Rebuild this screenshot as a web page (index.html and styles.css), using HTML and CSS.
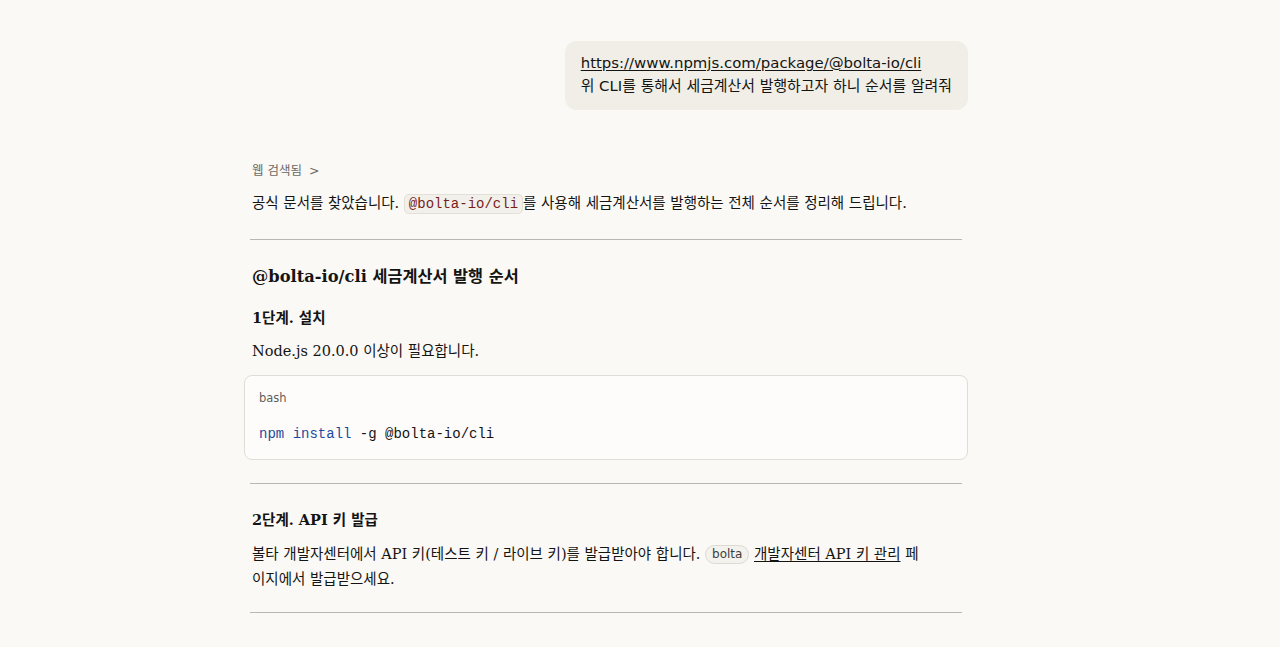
FILE: index.html
```html
<!DOCTYPE html>
<html lang="ko">
<head>
<meta charset="utf-8">
<title>Chat</title>
<link rel="stylesheet" href="styles.css">
</head>
<body>
<main class="thread">
  <div class="user-row">
    <div class="user-bubble">
      <a class="user-link" href="#">https://www.npmjs.com/package/@bolta-io/cli</a>
      <div>위 CLI를 통해서 세금계산서 발행하고자 하니 순서를 알려줘</div>
    </div>
  </div>

  <div class="assistant">
    <div class="search-note">웹 검색됨 <span class="chev">&gt;</span></div>
    <p class="para">공식 문서를 찾았습니다. <code class="inline-code">@bolta-io/cli</code>를 사용해 세금계산서를 발행하는 전체 순서를 정리해 드립니다.</p>
    <hr class="rule">
    <h2 class="h2">@bolta-io/cli 세금계산서 발행 순서</h2>
    <h3 class="h3">1단계. 설치</h3>
    <p class="para">Node.js 20.0.0 이상이 필요합니다.</p>
    <div class="code-block">
      <div class="code-lang">bash</div>
      <pre class="code"><span class="kw">npm</span> <span class="kw">install</span> -g @bolta-io/cli</pre>
    </div>
    <hr class="rule rule-2">
    <h3 class="h3 h3-step2">2단계. API 키 발급</h3>
    <p class="para">볼타 개발자센터에서 API 키(테스트 키 / 라이브 키)를 발급받아야 합니다. <span class="pill">bolta</span> <a class="link" href="#">개발자센터 API 키 관리</a> 페<wbr>이지에서 발급받으세요.</p>
    <hr class="rule rule-3">
  </div>
</main>
</body>
</html>
```
FILE: styles.css
```css
* { box-sizing: border-box; }
html, body { margin: 0; padding: 0; }
body {
  background: #faf9f5;
  color: #141413;
  font-family: "DejaVu Serif", "Noto Sans CJK KR", serif;
  height: 647px;
  overflow: hidden;
}
.thread {
  width: 724px;
  margin: 0 auto;
  padding-top: 41px;
  position: relative;
  left: -34px;
}
.user-row { display: flex; justify-content: flex-end; }
.user-bubble {
  background: #f0eee6;
  border-radius: 12px;
  padding: 11px 16px 12px 16px;
  font-family: "DejaVu Sans", "Noto Sans CJK KR", sans-serif;
  font-size: 14.9px;
  line-height: 23px;
  color: #141413;
}
.user-link { color: #141413; text-decoration: underline; text-underline-offset: 2px; }
.assistant { padding: 0 42px 0 8px; margin-top: 51px; }
.search-note {
  font-family: "DejaVu Sans", "Noto Sans CJK KR", sans-serif;
  font-size: 12.5px;
  color: #6b6a65;
  line-height: 20px;
  margin-bottom: 10px;
}
.chev { margin-left: 3px; }
.para {
  font-size: 14.5px;
  line-height: 25px;
  margin: 0;
}
.inline-code {
  font-family: "Liberation Mono", monospace;
  font-size: 14px;
  color: #7a1e1e;
  background: #f2f0ea;
  border: 1px solid #e3e0d8;
  border-radius: 5px;
  padding: 1px 4px;
}
.rule {
  border: 0;
  border-top: 1px solid #b9b7b0;
  margin: 22px -36px 24px -2px;
}
.h2 {
  font-size: 16.3px;
  font-weight: bold;
  line-height: 26px;
  margin: 0 0 16px 0;
}
.h3 {
  font-size: 14.5px;
  font-weight: bold;
  line-height: 24px;
  margin: 0 0 9px 0;
}
.h3-step2 { margin-bottom: 10px; }
.code-block {
  margin: 11px -42px 0 -8px;
  background: #fdfcfa;
  border: 1px solid #deddd6;
  border-radius: 8px;
  padding: 13px 14px 15px 14px;
}
.code-lang {
  font-family: "DejaVu Sans", sans-serif;
  font-size: 11.5px;
  color: #5f5e5a;
  line-height: 18px;
}
.code {
  margin: 17px 0 0 0;
  font-family: "Liberation Mono", monospace;
  font-size: 14px;
  line-height: 20px;
  color: #141413;
}
.kw { color: #1e4aa0; }
.rule-2 { margin-top: 23px; margin-bottom: 24px; }
.rule-3 { margin-top: 20px; }
.pill {
  display: inline-block;
  font-family: "DejaVu Sans", sans-serif;
  font-size: 12px;
  line-height: 17px;
  border: 1px solid #dcdad3;
  background: #f4f2ec;
  border-radius: 10px;
  padding: 0 6px;
  color: #3d3d3a;
  vertical-align: 1px;
}
.link { color: #141413; text-decoration: underline; text-underline-offset: 2px; }
```
